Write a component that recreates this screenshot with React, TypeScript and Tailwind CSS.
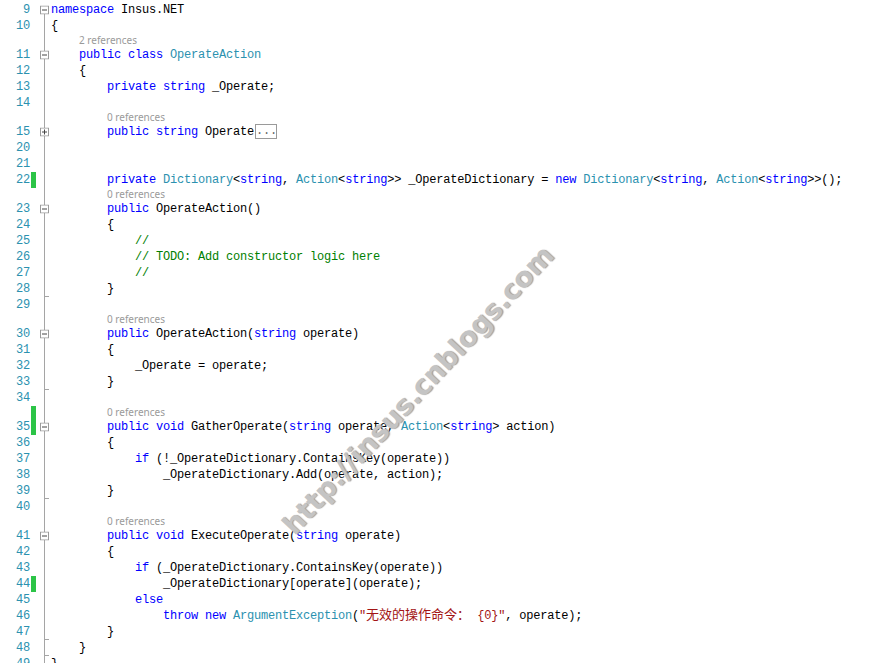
import React from "react";

type Seg = [string, string];
type Row =
  | { kind: "code"; n: number; segs: Seg[]; box?: "minus" | "plus"; bar?: boolean; tick?: boolean; first?: boolean; ellipsis?: boolean }
  | { kind: "ref"; indent: number; text: string; bar?: boolean };

const K = "k", T = "t", C = "c", S = "s", P = "p", Z = "z";

const colorOf: Record<string, string> = {
  k: "text-[#0000ff]",
  t: "text-[#2b91af]",
  c: "text-[#008000]",
  s: "text-[#a31515]",
  z: "text-[#a31515] text-[13px] tracking-normal",
  p: "text-black",
};

const I4 = "    ", I8 = "        ", I12 = "            ", I16 = "                ";

const rows: Row[] = [
  { kind: "code", n: 9, segs: [[K, "namespace"], [P, " Insus.NET"]], box: "minus", first: true },
  { kind: "code", n: 10, segs: [[P, "{"]] },
  { kind: "ref", indent: 4, text: "2 references" },
  { kind: "code", n: 11, segs: [[P, I4], [K, "public class "], [T, "OperateAction"]], box: "minus" },
  { kind: "code", n: 12, segs: [[P, I4 + "{"]] },
  { kind: "code", n: 13, segs: [[P, I8], [K, "private string "], [P, "_Operate;"]] },
  { kind: "code", n: 14, segs: [] },
  { kind: "ref", indent: 8, text: "0 references" },
  { kind: "code", n: 15, segs: [[P, I8], [K, "public string "], [P, "Operate"]], box: "plus", ellipsis: true },
  { kind: "code", n: 20, segs: [] },
  { kind: "code", n: 21, segs: [] },
  {
    kind: "code", n: 22, bar: true,
    segs: [[P, I8], [K, "private "], [T, "Dictionary"], [P, "<"], [K, "string"], [P, ", "], [T, "Action"], [P, "<"], [K, "string"], [P, ">> _OperateDictionary = "], [K, "new "], [T, "Dictionary"], [P, "<"], [K, "string"], [P, ", "], [T, "Action"], [P, "<"], [K, "string"], [P, ">>();"]],
  },
  { kind: "ref", indent: 8, text: "0 references" },
  { kind: "code", n: 23, segs: [[P, I8], [K, "public "], [P, "OperateAction()"]], box: "minus" },
  { kind: "code", n: 24, segs: [[P, I8 + "{"]] },
  { kind: "code", n: 25, segs: [[P, I12], [C, "//"]] },
  { kind: "code", n: 26, segs: [[P, I12], [C, "// TODO: Add constructor logic here"]] },
  { kind: "code", n: 27, segs: [[P, I12], [C, "//"]] },
  { kind: "code", n: 28, segs: [[P, I8 + "}"]], tick: true },
  { kind: "code", n: 29, segs: [] },
  { kind: "ref", indent: 8, text: "0 references" },
  { kind: "code", n: 30, segs: [[P, I8], [K, "public "], [P, "OperateAction("], [K, "string"], [P, " operate)"]], box: "minus" },
  { kind: "code", n: 31, segs: [[P, I8 + "{"]] },
  { kind: "code", n: 32, segs: [[P, I12 + "_Operate = operate;"]] },
  { kind: "code", n: 33, segs: [[P, I8 + "}"]], tick: true },
  { kind: "code", n: 34, segs: [] },
  { kind: "ref", indent: 8, text: "0 references", bar: true },
  {
    kind: "code", n: 35, bar: true, box: "minus",
    segs: [[P, I8], [K, "public void "], [P, "GatherOperate("], [K, "string"], [P, " operate, "], [T, "Action"], [P, "<"], [K, "string"], [P, "> action)"]],
  },
  { kind: "code", n: 36, segs: [[P, I8 + "{"]] },
  { kind: "code", n: 37, segs: [[P, I12], [K, "if"], [P, " (!_OperateDictionary.ContainsKey(operate))"]] },
  { kind: "code", n: 38, segs: [[P, I16 + "_OperateDictionary.Add(operate, action);"]] },
  { kind: "code", n: 39, segs: [[P, I8 + "}"]], tick: true },
  { kind: "code", n: 40, segs: [] },
  { kind: "ref", indent: 8, text: "0 references" },
  { kind: "code", n: 41, segs: [[P, I8], [K, "public void "], [P, "ExecuteOperate("], [K, "string"], [P, " operate)"]], box: "minus" },
  { kind: "code", n: 42, segs: [[P, I8 + "{"]] },
  { kind: "code", n: 43, segs: [[P, I12], [K, "if"], [P, " (_OperateDictionary.ContainsKey(operate))"]] },
  { kind: "code", n: 44, segs: [[P, I16 + "_OperateDictionary[operate](operate);"]], bar: true },
  { kind: "code", n: 45, segs: [[P, I12], [K, "else"]] },
  { kind: "code", n: 46, segs: [[P, I16], [K, "throw new "], [T, "ArgumentException"], [P, "("], [S, "\""], [Z, "无效的操作命令："], [S, " {0}\""], [P, ", operate);"]] },
  { kind: "code", n: 47, segs: [[P, I8 + "}"]], tick: true },
  { kind: "code", n: 48, segs: [[P, I4 + "}"]], tick: true },
  { kind: "code", n: 49, segs: [[P, "}"]] },
];

const mono = "font-['Liberation_Mono','Noto_Sans_CJK_SC',monospace] text-[12px] tracking-[-0.2px]";

function Box({ type }: { type: "minus" | "plus" }) {
  return (
    <svg width="9" height="9" viewBox="0 0 9 9" className="absolute left-[3px] top-1/2 -translate-y-1/2">
      <rect x="0.5" y="0.5" width="8" height="8" fill="white" stroke="#9a9a9a" />
      <line x1="2" y1="4.5" x2="7" y2="4.5" stroke="#444" />
      {type === "plus" && <line x1="4.5" y1="2" x2="4.5" y2="7" stroke="#444" />}
    </svg>
  );
}

function Gutter({ row, h }: { row: Row; h: string }) {
  const n = row.kind === "code" ? row.n : null;
  const bar = row.bar;
  const first = row.kind === "code" && row.first;
  return (
    <div className={`flex shrink-0 items-stretch ${h}`}>
      <div className={`w-[30px] text-right leading-4 text-[#2b91af] ${mono}`}>{n ?? ""}</div>
      <div className="w-[7px] pl-[1px]">{bar && <div className="h-full w-[5px] bg-[#2cc447]" />}</div>
      <div className="relative w-[14px]">
        <div className={`absolute left-[7px] w-px bg-[#a5a5a5] ${first ? "top-1/2 bottom-0" : "top-0 bottom-0"}`} />
        {row.kind === "code" && row.tick && <div className="absolute left-[7px] bottom-0 h-px w-[5px] bg-[#a5a5a5]" />}
        {row.kind === "code" && row.box && <Box type={row.box} />}
      </div>
    </div>
  );
}

export default function App() {
  return (
    <div className="relative w-[882px] h-[663px] overflow-hidden bg-white pt-[2px]">
      {rows.map((row, i) =>
        row.kind === "code" ? (
          <div key={i} className="flex h-4">
            <Gutter row={row} h="h-4" />
            <div className={`whitespace-pre leading-4 ${mono}`}>
              {row.segs.map(([c, t], j) => (
                <span key={j} className={colorOf[c]}>{t}</span>
              ))}
              {row.ellipsis && (
                <span className="inline-block align-middle ml-[1px] h-[15px] w-[22px] border border-[#9a9a9a] text-[#666] leading-[13px] text-center">...</span>
              )}
            </div>
          </div>
        ) : (
          <div key={i} className="flex h-[13px]">
            <Gutter row={row} h="h-[13px]" />
            <div
              className="font-['Noto_Sans',sans-serif] text-[10px] leading-[13px] text-[#9a9a9a]"
              style={{ paddingLeft: row.indent * 7 }}
            >
              {row.text}
            </div>
          </div>
        )
      )}
      <div className="pointer-events-none absolute left-[418px] top-[390px] -translate-x-1/2 -translate-y-1/2 -rotate-[47deg] whitespace-nowrap font-['DejaVu_Sans',sans-serif] text-[27.5px] font-bold text-[#c4c4c4] [text-shadow:1px_1px_1px_#a0a0a0]">
        http://insus.cnblogs.com
      </div>
    </div>
  );
}
